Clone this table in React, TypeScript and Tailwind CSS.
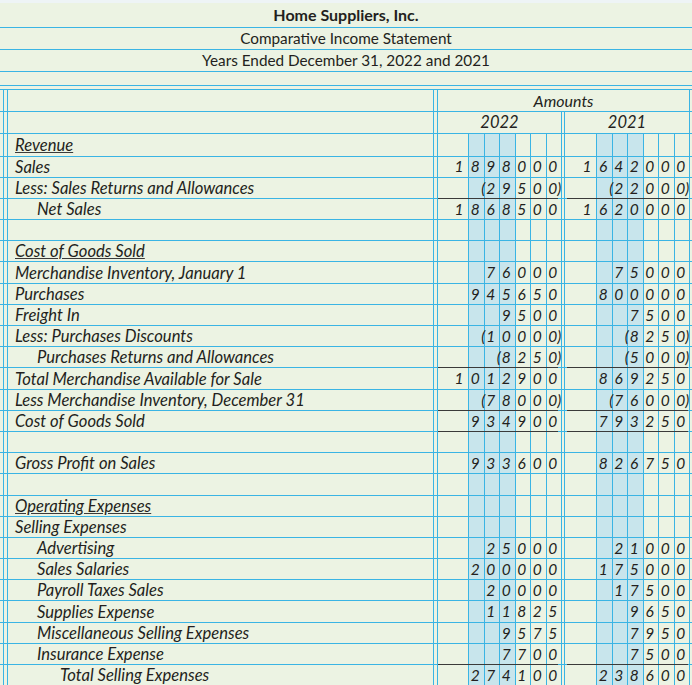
type Row = {
  label: string;
  indent?: number;
  head?: boolean;
  a?: string;
  b?: string;
  top?: boolean;
  bottom?: boolean;
};

const rows: Row[] = [
  { label: "Revenue", head: true },
  { label: "Sales", a: "1898000", b: "1642000" },
  { label: "Less: Sales Returns and Allowances", a: "(29500)", b: "(22000)" },
  { label: "Net Sales", indent: 1, a: "1868500", b: "1620000", top: true },
  { label: "" },
  { label: "Cost of Goods Sold", head: true },
  { label: "Merchandise Inventory, January 1", a: "76000", b: "75000" },
  { label: "Purchases", a: "945650", b: "800000" },
  { label: "Freight In", a: "9500", b: "7500" },
  { label: "Less: Purchases Discounts", a: "(10000)", b: "(8250)" },
  { label: "Purchases Returns and Allowances", indent: 1, a: "(8250)", b: "(5000)" },
  { label: "Total Merchandise Available for Sale", a: "1012900", b: "869250", top: true },
  { label: "Less Merchandise Inventory, December 31", a: "(78000)", b: "(76000)" },
  { label: "Cost of Goods Sold", a: "934900", b: "793250", top: true, bottom: true },
  { label: "" },
  { label: "Gross Profit on Sales", a: "933600", b: "826750" },
  { label: "" },
  { label: "Operating Expenses", head: true },
  { label: "Selling Expenses" },
  { label: "Advertising", indent: 1, a: "25000", b: "21000" },
  { label: "Sales Salaries", indent: 1, a: "200000", b: "175000" },
  { label: "Payroll Taxes Sales", indent: 1, a: "20000", b: "17500" },
  { label: "Supplies Expense", indent: 1, a: "11825", b: "9650" },
  { label: "Miscellaneous Selling Expenses", indent: 1, a: "9575", b: "7950" },
  { label: "Insurance Expense", indent: 1, a: "7700", b: "7500" },
  { label: "Total Selling Expenses", indent: 2, a: "274100", b: "238600", top: true },
];

const Cell = ({
  ch,
  open,
  close,
  className,
}: {
  ch: string;
  open: boolean;
  close: boolean;
  className: string;
}) => (
  <div className={`flex h-full items-center justify-center pt-[1px] pr-[2px] ${className}`}>
    {ch && (
      <span className="relative">
        {open && <span className="absolute right-full pr-[1px]">(</span>}
        {ch}
        {close && <span className="absolute left-full">)</span>}
      </span>
    )}
  </div>
);

const Block = ({
  amount,
  wide,
  top,
  bottom,
}: {
  amount?: string;
  wide?: boolean;
  top?: boolean;
  bottom?: boolean;
}) => {
  const neg = !!amount && amount.startsWith("(");
  const digits = (amount || "").replace(/[()]/g, "");
  // 7 positions: one in the blank margin, six ruled cells
  const slots = Array.from({ length: 7 }, (_, i) => {
    const k = digits.length - 7 + i;
    return k >= 0 ? digits[k] : "";
  });
  const firstIdx = 7 - digits.length;

  return (
    <div
      className={`relative flex h-full border-l border-[#3ab4e4] ${wide ? "w-[125px]" : "w-[124px]"}`}
    >
      <div className={wide ? "w-[15px]" : "w-[14px]"} />
      <Cell ch={slots[0]} open={neg && firstIdx === 0} close={false} className="w-[16px]" />
      {slots.slice(1).map((ch, i) => (
        <Cell
          key={i}
          ch={ch}
          open={neg && firstIdx === i + 1}
          close={neg && i === 5}
          className={`w-[15.5px] border-l border-[#3ab4e4] ${i < 3 ? "bg-[#c8e5ec]" : ""}`}
        />
      ))}
      {top && (
        <div
          className={`absolute -top-px h-px bg-[#3a3a3a] ${wide ? "left-[2px] right-px" : "left-0 right-[3px]"}`}
        />
      )}
      {bottom && (
        <div
          className={`absolute -bottom-px h-px bg-[#3a3a3a] ${wide ? "left-[2px] right-px" : "left-0 right-[3px]"}`}
        />
      )}
    </div>
  );
};

const LeftRails = () => (
  <>
    <div className="w-[3px]" />
    <div className="w-[4px] border-l border-[#3ab4e4]" />
  </>
);

export default function App() {
  return (
    <div className="w-[692px] h-[685px] overflow-hidden bg-[#ecf3e3] text-[#231f20] font-['Lato',sans-serif]">
      <div className="h-[3px] bg-[#eef4f6]" />
      <div className="h-[25px] flex items-center justify-center border-b border-[#3ab4e4] text-[16px] font-bold">
        Home Suppliers, Inc.
      </div>
      <div className="h-[22px] flex items-center justify-center border-b border-[#3ab4e4] text-[15.3px]">
        Comparative Income Statement
      </div>
      <div className="h-[22px] flex items-center justify-center border-b border-[#3ab4e4] text-[15.3px]">
        Years Ended December 31, 2022 and 2021
      </div>
      <div className="h-[14px] border-b border-[#3ab4e4]" />

      <div className="mt-[3px] border-t border-[#3ab4e4] italic">
        {/* Amounts header */}
        <div className="flex h-[22px] border-b border-[#3ab4e4]">
          <LeftRails />
          <div className="w-[426px] border-l border-[#3ab4e4]" />
          <div className="w-[4px] border-l border-[#3ab4e4]" />
          <div className="w-[252px] border-l border-[#3ab4e4] flex items-center justify-center text-[16px]">
            Amounts
          </div>
          <div className="w-[3px] border-l border-[#3ab4e4]" />
        </div>
        {/* Years header */}
        <div className="flex h-[22px] border-b border-[#3ab4e4]">
          <LeftRails />
          <div className="w-[426px] border-l border-[#3ab4e4]" />
          <div className="w-[4px] border-l border-[#3ab4e4]" />
          <div className="w-[124px] border-l border-[#3ab4e4] flex items-center justify-center text-[16.5px]">
            2022
          </div>
          <div className="w-[3px] border-l border-[#3ab4e4]" />
          <div className="w-[125px] border-l border-[#3ab4e4] flex items-center justify-center text-[16.5px]">
            2021
          </div>
          <div className="w-[3px] border-l border-[#3ab4e4]" />
        </div>

        {rows.map((r, i) => (
          <div
            key={i}
            className={`flex border-b border-[#3ab4e4] ${i === 0 ? "h-[22.5px]" : "h-[21.2px]"}`}
          >
            <LeftRails />
            <div
              className={`w-[426px] border-l border-[#3ab4e4] flex items-center pt-[1px] text-[16.6px] whitespace-nowrap ${
                r.indent === 2 ? "pl-[52px]" : r.indent === 1 ? "pl-[29px]" : "pl-[7px]"
              }`}
            >
              <span
                className={
                  r.head ? "underline decoration-[#3a3a3a] underline-offset-[1px]" : ""
                }
              >
                {r.label}
              </span>
            </div>
            <div className="w-[4px] border-l border-[#3ab4e4]" />
            <div className="text-[15.5px] flex">
              <Block amount={r.a} top={r.top} bottom={r.bottom} />
              <div className="w-[3px] border-l border-[#3ab4e4]" />
              <Block amount={r.b} wide top={r.top} bottom={r.bottom} />
            </div>
            <div className="w-[3px] border-l border-[#3ab4e4]" />
          </div>
        ))}
      </div>
    </div>
  );
}
